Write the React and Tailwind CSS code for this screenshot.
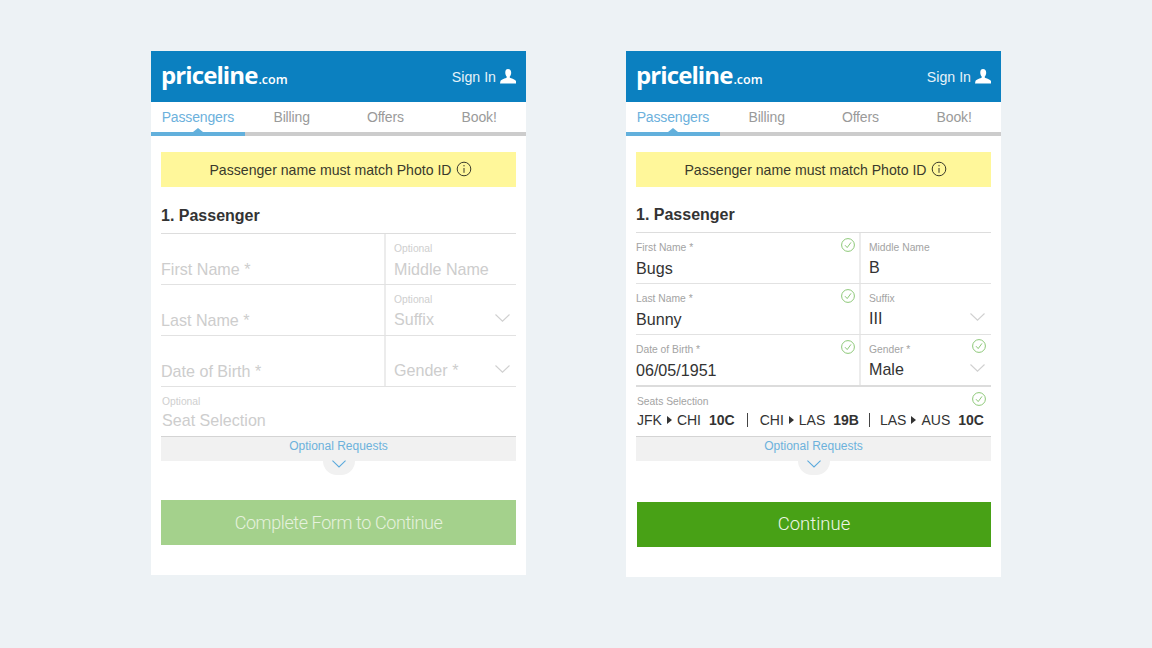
const sans = { fontFamily: '"Liberation Sans", Arial, sans-serif' };

function Chevron({ className = "", color = "#d0d0d0", w = 15, h = 8 }) {
  return (
    <svg width={w} height={h} viewBox="0 0 15 8" className={className} fill="none" stroke={color} strokeWidth="1.1">
      <polyline points="0.5,0.5 7.5,7.2 14.5,0.5" />
    </svg>
  );
}

function Check({ className = "" }) {
  return (
    <svg width="14" height="14" viewBox="0 0 14 14" className={className} fill="none" stroke="#8dc878" strokeWidth="1">
      <circle cx="7" cy="7" r="6.4" />
      <polyline points="4,7.2 6.2,9.6 10,4.4" />
    </svg>
  );
}

function Field({ label, value, placeholder, chevron, check, right, raised }) {
  const hasValue = value !== undefined;
  return (
    <div className={`relative h-full ${right ? "w-[130px] pl-[8px]" : "flex-1 border-r-2 border-[#ececec]"} pt-[8px]`}>
      <div className={`h-[13px] text-[10.3px] leading-[13px] ${hasValue ? "text-[#a3a3a3]" : "text-[#cfcfcf]"}`}>
        {label || "\u00a0"}
      </div>
      <div className={`${raised ? "mt-[3px]" : "mt-[4px]"} h-[20px] text-[16.1px] leading-[20px] ${hasValue ? "text-[#333333]" : "text-[#cdcdcd]"}`}>
        {hasValue ? value : placeholder}
      </div>
      {chevron && <Chevron className="absolute right-[6px] top-[29px]" />}
      {check && <Check className={`absolute ${right ? "right-[5px] top-[4px]" : "right-[4px] top-[5px]"}`} />}
    </div>
  );
}

function Row({ children, h = "h-[51px]", border = "border-[#e2e2e2]" }) {
  return <div className={`flex ${h} border-b ${border}`}>{children}</div>;
}

function Tri() {
  return (
    <svg width="5" height="8" viewBox="0 0 5 8" className="mx-[5px]">
      <polygon points="0,0 5,4 0,8" fill="#333333" />
    </svg>
  );
}

function Leg({ a, b, seat }) {
  return (
    <span className="flex items-center">
      <span>{a}</span>
      <Tri />
      <span>{b}</span>
      <span className="ml-[8px] font-bold">{seat}</span>
    </span>
  );
}

function Card({ filled }) {
  return (
    <div className={`w-[375px] bg-white ${filled ? "h-[526px]" : "h-[524px]"} text-[#333333]`} style={sans}>
      <header className="flex h-[51px] items-center justify-between bg-[#0b80c0] pl-[10px] pr-[10px] text-white">
        <div className="flex items-baseline pb-[3px]" style={{ fontFamily: '"Open Sans", sans-serif' }}>
          <span className="text-[24px] font-bold leading-none tracking-[-0.9px]">priceline</span>
          <span className="ml-[1px] text-[12.5px] font-semibold leading-none">.com</span>
        </div>
        <div className="flex items-center gap-[4px]">
          <span className="pt-[2px] text-[14.2px] text-[#e6f2f9]">Sign In</span>
          <svg width="16" height="15" viewBox="0 0 17 15" preserveAspectRatio="none" fill="white">
            <path d="M8.5 0c2.2 0 3.4 1.6 3.4 3.7 0 1.5-.6 2.9-1.4 3.7-.3.4-.3 1 .1 1.3.8.6 5.9 1.6 6.4 3.3l.5 2.5H0l.5-2.5c.5-1.7 5.6-2.7 6.4-3.3.4-.3.4-.9.1-1.3-.8-.8-1.4-2.2-1.4-3.7C5.6 1.6 6.3 0 8.5 0z" />
          </svg>
        </div>
      </header>

      <nav className="relative h-[34px] border-b-[4px] border-[#cccccc]">
        <div className="grid h-[30px] grid-cols-4 text-center text-[14px] leading-[30px] tracking-[-0.15px] text-[#9a9a9a]">
          <span className="text-[#6cb1dc]">Passengers</span>
          <span>Billing</span>
          <span>Offers</span>
          <span>Book!</span>
        </div>
        <div className="absolute bottom-[-4px] left-0 h-[4px] w-[94px] bg-[#62b0dc]" />
        <div className="absolute bottom-0 left-[42px] h-0 w-0 border-x-[5px] border-b-[4px] border-x-transparent border-b-[#62b0dc]" />
      </nav>

      <div className="px-[10px]">
        <div className="mt-[16px] flex h-[35px] items-center justify-center gap-[4px] bg-[#fff79a] pl-[4px] pt-[2px] text-[14.1px] text-[#3a3a2c]">
          <span>Passenger name must match Photo ID</span>
          <svg width="16" height="16" viewBox="0 0 16 16" fill="none" stroke="#3a3a2c" strokeWidth="1" className="mb-[4px]">
            <circle cx="8" cy="8" r="6.8" />
            <line x1="8" y1="7" x2="8" y2="11.8" />
            <line x1="8" y1="4" x2="8" y2="5.4" />
          </svg>
        </div>

        <h2 className={`${filled ? "mt-[18px]" : "mt-[19px]"} h-[28px] border-b border-[#dddddd] text-[16px] font-bold leading-[20px]`}>
          1. Passenger
        </h2>

        {filled ? (
          <>
            <Row>
              <Field label="First Name *" value="Bugs" check />
              <Field right raised label="Middle Name" value="B" />
            </Row>
            <Row>
              <Field label="Last Name *" value="Bunny" check />
              <Field right raised label="Suffix" value="III" chevron />
            </Row>
            <Row h="h-[52px]" border="border-[#dcdcdc] border-b-2">
              <Field label="Date of Birth *" value="06/05/1951" check />
              <Field right raised label="Gender *" value="Male" chevron check />
            </Row>
          </>
        ) : (
          <>
            <Row>
              <Field placeholder="First Name *" />
              <Field right label="Optional" placeholder="Middle Name" />
            </Row>
            <Row>
              <Field placeholder="Last Name *" />
              <Field right raised label="Optional" placeholder="Suffix" chevron />
            </Row>
            <Row>
              <Field placeholder="Date of Birth *" />
              <Field right raised placeholder="Gender *" chevron />
            </Row>
          </>
        )}

        <div className="relative h-[50px] border-b border-[#d4d4d4] pl-[1px] pt-[8px]">
          <div className={`h-[13px] text-[10.3px] leading-[13px] ${filled ? "text-[#a3a3a3]" : "text-[#cfcfcf]"}`}>
            {filled ? "Seats Selection" : "Optional"}
          </div>
          {filled ? (
            <>
              <div className="mt-[2px] flex h-[20px] items-center text-[14px] leading-[20px] text-[#333333]">
                <Leg a="JFK" b="CHI" seat="10C" />
                <span className="mx-[12px] h-[14px] w-px bg-[#444444]" />
                <Leg a="CHI" b="LAS" seat="19B" />
                <span className="mx-[10px] h-[14px] w-px bg-[#444444]" />
                <Leg a="LAS" b="AUS" seat="10C" />
              </div>
              <Check className="absolute right-[5px] top-[5px]" />
            </>
          ) : (
            <div className="mt-[2px] h-[20px] text-[16.1px] leading-[20px] text-[#cdcdcd]">Seat Selection</div>
          )}
        </div>

        <div className="h-[24px] bg-[#f1f1f1] text-center text-[12px] leading-[18px] text-[#6cb1dc]">Optional Requests</div>
        <div className="relative mx-auto h-[14px] w-[32px] rounded-b-[16px] bg-[#f1f1f1]">
          <Chevron className="absolute left-[9px] top-[-1px]" color="#5aa9dc" w={14} h={8} />
        </div>

        <button
          className={`${filled ? "mt-[27px] ml-px w-[354px] bg-[#48a116] text-[18.5px] text-[#eef6e8]" : "mt-[25px] w-[355px] bg-[#a4d18c] pb-[1px] text-[18px] tracking-[-0.4px] text-[#e6f2de]"} block h-[45px] text-center font-light`}
          style={{ fontFamily: "Roboto, sans-serif" }}
        >
          {filled ? "Continue" : "Complete Form to Continue"}
        </button>
      </div>
    </div>
  );
}

export default function App() {
  return (
    <div className="flex h-[648px] w-[1152px] items-start justify-center gap-[100px] bg-[#edf2f5] pt-[51px]">
      <Card />
      <Card filled />
    </div>
  );
}
